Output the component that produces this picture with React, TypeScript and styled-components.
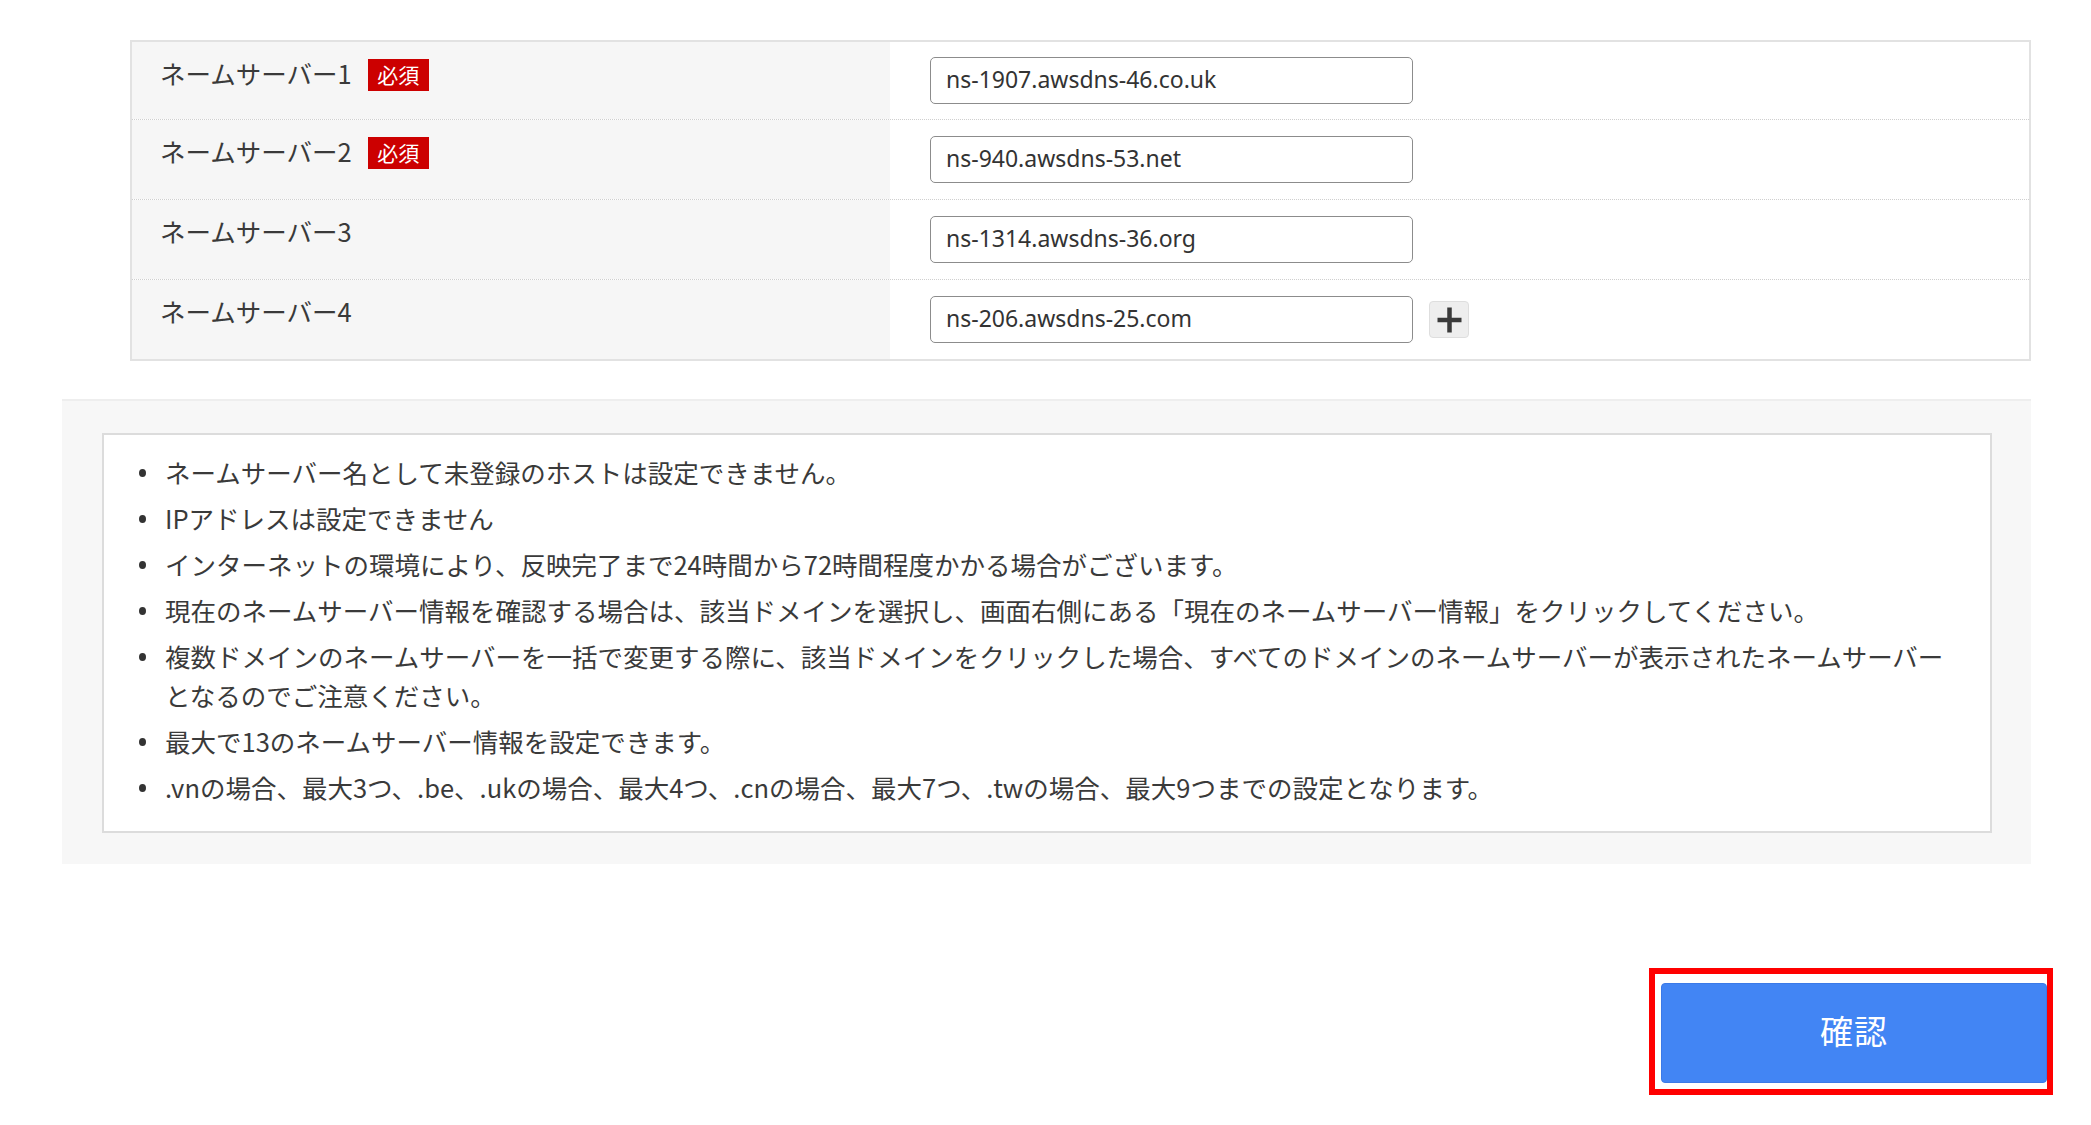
import React from "react";
import styled, { createGlobalStyle } from "styled-components";

const GlobalStyle = createGlobalStyle`
  html, body {
    margin: 0;
    padding: 0;
    background: #ffffff;
  }
  body {
    font-family: "Noto Sans CJK JP", "Noto Sans", sans-serif;
    color: #333333;
  }
  * { box-sizing: border-box; }
`;

const Page = styled.div`
  width: 2091px;
  padding: 40px 60px 29px 62px;
  display: flex;
  flex-direction: column;
`;

const Table = styled.div`
  margin-left: 68px;
  border: 2px solid #e2e2e2;
  display: flex;
  flex-direction: column;
`;

const Row = styled.div<{ $first?: boolean }>`
  display: grid;
  grid-template-columns: 758px 1fr;
  height: ${(p) => (p.$first ? "77px" : "80px")};
  border-top: ${(p) => (p.$first ? "none" : "1px dotted #cfcfcf")};
`;

const LabelCell = styled.div`
  background: #f6f6f6;
  padding: 12px 0 0 28px;
  display: flex;
  align-items: flex-start;
  gap: 16px;
`;

const LabelText = styled.span`
  font-size: 25.5px;
  line-height: 38px;
  color: #3a3a3a;
  white-space: nowrap;
`;

const Badge = styled.span`
  margin-top: 5px;
  width: 61px;
  height: 32px;
  background: #cc0000;
  color: #ffffff;
  font-size: 21px;
  line-height: 31px;
  text-align: center;
`;

const InputCell = styled.div`
  background: #ffffff;
  padding-left: 40px;
  display: flex;
  align-items: center;
  gap: 16px;
`;

const TextInput = styled.input`
  width: 483px;
  height: 47px;
  border: 1.5px solid #8c8c8c;
  border-radius: 5px;
  padding: 0 15px 4px;
  font-family: "Noto Sans", sans-serif;
  font-size: 23px;
  color: #333333;
  background: #ffffff;
  outline: none;
`;

const AddButton = styled.button`
  width: 40px;
  height: 37px;
  padding: 0;
  border: 1px solid #dedede;
  border-radius: 4px;
  background: #eeeeee;
  display: flex;
  align-items: center;
  justify-content: center;
`;

const Notice = styled.div`
  margin-top: 38px;
  background: #f7f7f7;
  border-top: 2px solid #eeeeee;
  padding: 32px 39px 31px 40px;
`;

const NoticeBox = styled.div`
  background: #ffffff;
  border: 2px solid #dcdcdc;
  padding: 17px 40px 25px 35px;
`;

const List = styled.ul`
  list-style: none;
  margin: 0;
  padding: 0;
  display: flex;
  flex-direction: column;
  gap: 7px;
`;

const Item = styled.li`
  display: flex;
  align-items: flex-start;
  font-size: 25.5px;
  line-height: 39px;
  color: #3a3a3a;
  &::before {
    content: "";
    flex: 0 0 7px;
    height: 8px;
    margin: 17px 19px 0 0;
    border-radius: 50%;
    background: #333333;
  }
`;

const Footer = styled.div`
  margin-top: 104px;
  margin-right: -22px;
  display: flex;
  justify-content: flex-end;
`;

const Highlight = styled.div`
  border: 6px solid #ff0000;
  padding: 9px 0 6px 6px;
  display: flex;
`;

const ConfirmButton = styled.button`
  width: 386px;
  height: 100px;
  padding: 0 0 7px;
  background: #4285f4;
  border: 1px solid #3b7ae8;
  border-radius: 4px;
  color: #ffffff;
  font-family: "Noto Sans CJK JP", sans-serif;
  font-size: 33px;
  letter-spacing: 1px;
`;

const PlusIcon = () => (
  <svg width="25" height="26" viewBox="0 0 25 26">
    <path d="M12.5 0.5v25M0.5 13h24" stroke="#3a3a3a" strokeWidth="4.5" />
  </svg>
);

const servers = [
  { label: "ネームサーバー1", value: "ns-1907.awsdns-46.co.uk", required: true },
  { label: "ネームサーバー2", value: "ns-940.awsdns-53.net", required: true },
  { label: "ネームサーバー3", value: "ns-1314.awsdns-36.org", required: false },
  { label: "ネームサーバー4", value: "ns-206.awsdns-25.com", required: false },
];

const notes = [
  "ネームサーバー名として未登録のホストは設定できません。",
  "IPアドレスは設定できません",
  "インターネットの環境により、反映完了まで24時間から72時間程度かかる場合がございます。",
  "現在のネームサーバー情報を確認する場合は、該当ドメインを選択し、画面右側にある「現在のネームサーバー情報」をクリックしてください。",
  "複数ドメインのネームサーバーを一括で変更する際に、該当ドメインをクリックした場合、すべてのドメインのネームサーバーが表示されたネームサーバーとなるのでご注意ください。",
  "最大で13のネームサーバー情報を設定できます。",
  ".vnの場合、最大3つ、.be、.ukの場合、最大4つ、.cnの場合、最大7つ、.twの場合、最大9つまでの設定となります。",
];

export default function App() {
  return (
    <>
      <GlobalStyle />
      <Page>
        <Table>
          {servers.map((s, i) => (
            <Row key={s.label} $first={i === 0}>
              <LabelCell>
                <LabelText>{s.label}</LabelText>
                {s.required && <Badge>必須</Badge>}
              </LabelCell>
              <InputCell>
                <TextInput defaultValue={s.value} />
                {i === servers.length - 1 && (
                  <AddButton aria-label="追加">
                    <PlusIcon />
                  </AddButton>
                )}
              </InputCell>
            </Row>
          ))}
        </Table>
        <Notice>
          <NoticeBox>
            <List>
              {notes.map((n) => (
                <Item key={n}>
                  <span>{n}</span>
                </Item>
              ))}
            </List>
          </NoticeBox>
        </Notice>
        <Footer>
          <Highlight>
            <ConfirmButton>確認</ConfirmButton>
          </Highlight>
        </Footer>
      </Page>
    </>
  );
}
